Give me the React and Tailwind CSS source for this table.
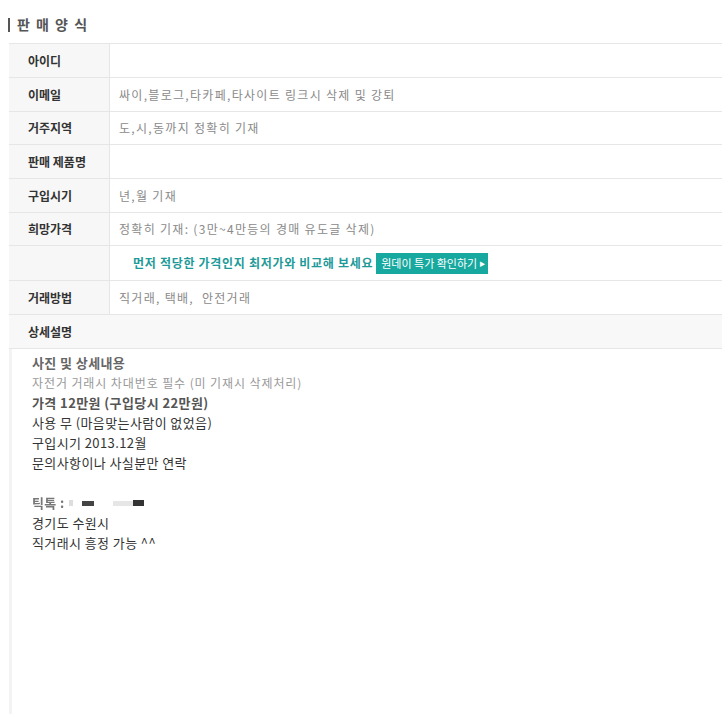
import React from "react";

const rows = [
  { label: "아이디", value: "", h: "h-[34px]" },
  { label: "이메일", value: "싸이,블로그,타카페,타사이트 링크시 삭제 및 강퇴", h: "h-[34px]" },
  { label: "거주지역", value: "도,시,동까지 정확히 기재", h: "h-[33px]" },
  { label: "판매 제품명", value: "", h: "h-[34px]" },
  { label: "구입시기", value: "년,월 기재", h: "h-[34px]" },
  { label: "희망가격", value: "정확히 기재: (3만~4만등의 경매 유도글 삭제)", h: "h-[33px]" },
];

const Row = ({ label, children, h = "h-[34px]" }) => (
  <div className={`flex ${h} border-b border-[#e6e6e6]`}>
    <div className="w-[101px] shrink-0 bg-[#f7f7f7] border-r border-[#e6e6e6] flex items-center pl-[19px] text-[12px] font-bold text-[#333]">
      {label}
    </div>
    <div className="flex-1 flex items-center pl-[9px] text-[12px] tracking-[1.3px] text-[#8a8a8a]">
      {children}
    </div>
  </div>
);

const App = () => {
  return (
    <div
      className="w-[722px] h-[714px] bg-white overflow-hidden"
      style={{ fontFamily: '"Noto Sans CJK KR", "Noto Sans", sans-serif' }}
    >
      <div className="h-[43px] flex items-center pl-[8px] pt-[6px]">
        <span className="w-[2px] h-[14px] bg-[#555] mr-[7px]"></span>
        <span className="text-[14px] font-bold text-[#555] tracking-[1.5px]">판 매 양 식</span>
      </div>

      <div className="ml-[9px] border-t border-[#e6e6e6]">
        {rows.map((r) => (
          <Row key={r.label} label={r.label} h={r.h}>
            {r.value}
          </Row>
        ))}
        <Row label="" h="h-[35px]">
          <span className="pl-[14px] text-[12px] font-bold tracking-[0.7px] text-[#1e9a98]">
            먼저 적당한 가격인지 최저가와 비교해 보세요
          </span>
          <span className="ml-[3px] h-[21px] pl-[5px] pr-[3px] bg-[#17a99f] text-white text-[11px] tracking-normal flex items-center">
            원데이 특가 확인하기
            <span className="ml-[2px] text-[6px]">▶</span>
          </span>
        </Row>
        <Row label="거래방법" h="h-[34px]">직거래, 택배,&nbsp;&nbsp;안전거래</Row>
        <div className="h-[34px] bg-[#f8f8f8] border-b border-[#e6e6e6] flex items-center pl-[19px] text-[12px] font-bold text-[#333]">
          상세설명
        </div>
        <div className="border-l-[3px] border-[#f3f3f3] h-[400px] pl-[20px] pt-[4px] text-[13px] leading-[20px] tracking-[0.4px] text-[#333]">
          <p className="font-bold text-[#666]">사진 및 상세내용</p>
          <p className="text-[12px] tracking-[0.9px] text-[#999]">자전거 거래시 차대번호 필수 (미 기재시 삭제처리)</p>
          <p className="font-bold text-[#555]">가격 12만원 (구입당시 22만원)</p>
          <p>사용 무 (마음맞는사람이 없었음)</p>
          <p>구입시기 2013.12월</p>
          <p>문의사항이나 사실분만 연락</p>
          <p>&nbsp;</p>
          <p className="flex items-center">
            <span className="font-bold text-[#777] blur-[0.4px]">틱톡 :</span>
            <span className="ml-[4px] w-[4px] h-[6px] bg-[#ddd]"></span>
            <span className="ml-[9px] w-[12px] h-[5px] bg-[#444]"></span>
            <span className="ml-[19px] w-[20px] h-[5px] bg-[#e6e6e6]"></span>
            <span className="w-[11px] h-[6px] bg-[#333]"></span>
          </p>
          <p>경기도 수원시</p>
          <p>직거래시 흥정 가능 ^^</p>
        </div>
      </div>
    </div>
  );
};

export default App;
